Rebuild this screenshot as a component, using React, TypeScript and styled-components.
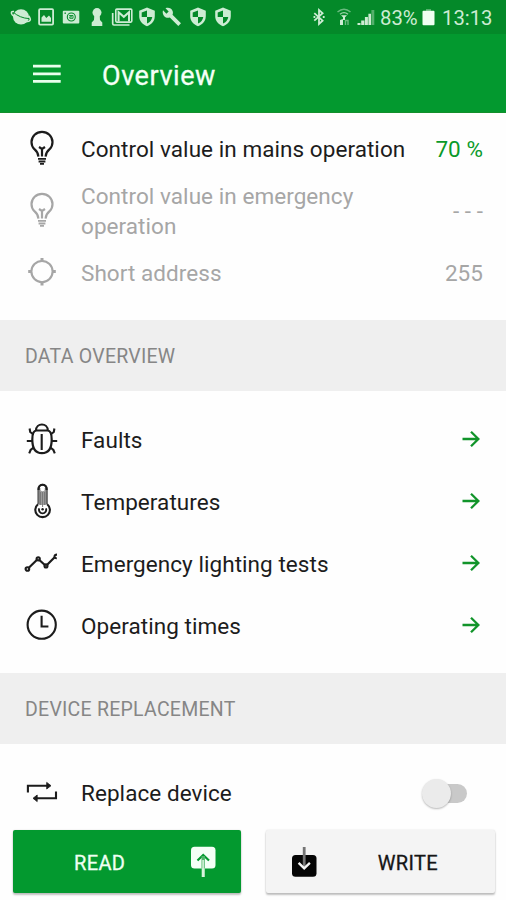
import React from "react";
import styled, { createGlobalStyle } from "styled-components";

const GREEN = "#03992f";

const GlobalStyle = createGlobalStyle`
  *, *::before, *::after { box-sizing: border-box; }
  body { margin: 0; background: #fefefe; font-family: Roboto, "Liberation Sans", sans-serif; }
`;

const Screen = styled.div`
  display: flex;
  flex-direction: column;
  width: 506px;
  height: 900px;
  overflow: hidden;
  background: #fefefe;
`;

const StatusBar = styled.div`
  display: flex;
  align-items: center;
  justify-content: space-between;
  flex: none;
  height: 34px;
  padding: 0 13px 0 8px;
  background: #048929;
  color: #cdecd3;
`;

const Notifications = styled.div`
  display: grid;
  grid-template-columns: repeat(9, 25.3px);
  justify-items: center;
`;

const SystemStatus = styled.div`
  display: flex;
  align-items: center;
`;

const StatusText = styled.span<{ $left: number; $width: number }>`
  width: ${(p) => p.$width}px;
  margin-left: ${(p) => p.$left}px;
  font-size: 20.3px;
  line-height: 34px;
  white-space: nowrap;
  padding-top: 1px;
`;

const Glyph = styled.svg<{ $left?: number }>`
  display: block;
  flex: none;
  margin-left: ${(p) => p.$left ?? 0}px;
  overflow: visible;
`;

const AppBar = styled.header`
  display: flex;
  align-items: center;
  flex: none;
  height: 79px;
  padding: 2px 0 0 32px;
  gap: 41px;
  background: ${GREEN};
  border-bottom: 1px solid #138f2c;
`;

const Title = styled.h1`
  margin: 0;
  color: #f4fff6;
  font-size: 27px;
  font-weight: 400;
  line-height: 34px;
  letter-spacing: 0.55px;
  padding-top: 3px;
  -webkit-text-stroke: 0.3px #f4fff6;
`;

const List = styled.section<{ $top: number; $bottom: number }>`
  flex: none;
  padding: ${(p) => p.$top}px 0 ${(p) => p.$bottom}px 21px;
`;

const Row = styled.div<{ $muted?: boolean }>`
  display: flex;
  align-items: center;
  height: 62px;
  padding-right: 23px;
  color: ${(p) => (p.$muted ? "#a6a6a6" : "#1c1c1c")};
`;

const RowIcon = styled.svg`
  display: block;
  flex: none;
  width: 40px;
  height: 40px;
  margin-right: 20px;
  fill: none;
  stroke: currentColor;
  stroke-width: 2.1;
`;

const Label = styled.span`
  width: 335px;
  font-size: 22.5px;
  line-height: 30px;
  letter-spacing: 0.06px;
`;

const Value = styled.span<{ $accent?: boolean }>`
  margin-left: auto;
  font-size: 22.5px;
  line-height: 30px;
  letter-spacing: 0.06px;
  white-space: nowrap;
  color: ${(p) => (p.$accent ? "#0a9a2a" : "inherit")};
`;

const Arrow = styled.svg`
  display: block;
  width: 18px;
  height: 18px;
  margin: 0 3px 2px auto;
  fill: none;
  stroke: #11942a;
  stroke-width: 2.3;
`;

const SectionHeader = styled.h2`
  display: flex;
  align-items: center;
  flex: none;
  height: 71px;
  margin: 0;
  padding: 2px 0 0 25px;
  background: #efefef;
  color: #868686;
  font-size: 19.5px;
  font-weight: 400;
  letter-spacing: 0.25px;
`;

const Track = styled.span`
  position: relative;
  width: 38px;
  height: 19px;
  margin: 0 16px 0 auto;
  border-radius: 10px;
  background: #c9c9c9;
`;

const Knob = styled.span`
  position: absolute;
  left: -7px;
  top: -5px;
  width: 29px;
  height: 29px;
  border-radius: 50%;
  background: #ebebeb;
  box-shadow: 0 1px 2px rgba(0, 0, 0, 0.28);
`;

const Actions = styled.footer`
  display: grid;
  grid-template-columns: 228px 229px;
  gap: 25px;
  padding-left: 13px;
  margin-top: 6px;
`;

const ActionButton = styled.button<{ $primary?: boolean }>`
  display: flex;
  align-items: center;
  justify-content: space-between;
  height: 63px;
  padding: ${(p) => (p.$primary ? "0 25px 0 61px" : "0 57px 0 25px")};
  border: 0;
  border-radius: 2px;
  background: ${(p) => (p.$primary ? GREEN : "#f4f4f4")};
  color: ${(p) => (p.$primary ? "#effff2" : "#161616")};
  font: 400 20px Roboto, "Liberation Sans", sans-serif;
  box-shadow: 0 2px 2px rgba(0, 0, 0, 0.24), 0 0 2px rgba(0, 0, 0, 0.12);
`;

const ActionText = styled.span`
  padding-top: 2px;
  letter-spacing: 0.35px;
  -webkit-text-stroke: 0.3px currentColor;
`;

const Bulb = () => (
  <RowIcon viewBox="0 0 40 40">
    <path d="M17.4 27.6C17.2 24.3 15.8 22.2 13.4 20.2A10.5 10.3 0 1 1 28.6 20.2C26.2 22.2 24.8 24.3 24.6 27.6" strokeWidth="2.2" />
    <path d="M18 18L21 20L24 18M21 19.5V27.5" strokeWidth="2.2" />
    <path d="M17 29.9H25M17.6 32.5H24.4M19 34.8H23" strokeWidth="1.8" />
  </RowIcon>
);

const Crosshair = () => (
  <RowIcon viewBox="0 0 40 40">
    <circle cx="21" cy="18.6" r="10.6" />
    <path d="M21 5V9M21 28.5V32.4M7.2 18.6H11M31 18.6H34.8" strokeWidth="3" />
  </RowIcon>
);

const Bug = () => (
  <RowIcon viewBox="0 0 40 40">
    <path d="M15 10.5C15 2.4 26.8 2.4 26.8 10.5" />
    <path d="M15.5 10.5H26.5C29.5 10.5 30.7 14 30.7 19.5C30.7 28.5 27 33.2 20.9 33.2S11.3 28.5 11.3 19.5C11.3 14 12.5 10.5 15.5 10.5Z" strokeWidth="2.2" />
    <path d="M20.7 14V30M5.8 21H11.3M30.7 21H36.2M8.6 8.5L9.2 12L12.5 14.5M33.4 8.5L32.8 12L29.5 14.5M8.2 33.4L9.6 30L12.6 27.5M33.8 33.4L32.4 30L29.4 27.5" />
  </RowIcon>
);

const Thermometer = () => (
  <RowIcon viewBox="0 0 40 40">
    <path d="M17.4 6H25.8V23H17.4Z" fill="#a0a0a0" stroke="none" />
    <path d="M17.4 22V7A4.2 4.2 0 0 1 25.8 7V22" stroke="#666" />
    <path d="M17.6 8V6.8A4 4 0 0 1 25.6 6.8V8" />
    <path d="M17 22.2A7.3 7.3 0 1 0 26.2 22.2" />
    <path d="M21.6 10V25M19.6 10V23M23.6 10V23" stroke="#777" strokeWidth="1" />
    <circle cx="21.6" cy="7" r="2.2" fill="#fff" stroke="none" />
    <path d="M18.3 26.3A3.6 3.6 0 1 0 24.9 26.3" strokeWidth="1.9" />
    <circle cx="21.6" cy="27.2" r="1.2" fill="currentColor" stroke="none" />
  </RowIcon>
);

const Trend = () => (
  <RowIcon viewBox="0 0 40 40">
    <path d="M7.8 23.8L15.8 16M18.6 16.2L23.6 20.8M26.4 20.6L33.4 13.5" strokeWidth="2.2" />
    <circle cx="6.4" cy="25" r="1.8" />
    <circle cx="17.2" cy="14.8" r="1.6" />
    <circle cx="25" cy="21.9" r="1.5" />
    <path d="M36 10.6C32.7 10.5 32.7 14.4 35.8 14.3" />
  </RowIcon>
);

const Clock = () => (
  <RowIcon viewBox="0 0 40 40">
    <circle cx="20.7" cy="18.7" r="14.1" />
    <path d="M20.6 9.8V20.5H27.4" />
  </RowIcon>
);

const Swap = () => (
  <RowIcon viewBox="0 0 40 40">
    <path d="M6.9 19.5V12.7H28M35 18.5V25.3H14" />
    <path d="M25.7 9.4L30 12.7L25.7 16ZM16.2 22L12 25.3L16.2 28.6Z" fill="currentColor" strokeWidth="0.8" />
  </RowIcon>
);

const GoArrow = () => (
  <Arrow viewBox="0 0 18 18">
    <path d="M0.5 9H16.5M9 1.7L16.4 9L9 16.3" />
  </Arrow>
);

const Shield = () => (
  <Glyph width="22" height="22" viewBox="0 0 22 22">
    <path d="M11 1.6L18.8 4.8V10C18.8 14.8 15.7 18.6 11 20.2C6.3 18.6 3.2 14.8 3.2 10V4.8Z" fill="currentColor" />
    <path d="M11 4.6V11H5.7V6.4ZM11 11H16.3C15.8 14 14 16.3 11 17.5Z" fill="#048929" />
  </Glyph>
);

const statusIcons = [
  <Glyph width="22" height="22" viewBox="0 0 22 22">
    <ellipse cx="11" cy="10.8" rx="8" ry="7.6" fill="currentColor" />
    <path d="M3.2 6.2C7.5 10 13 12.3 19 12.6" fill="none" stroke="#048929" strokeWidth="1" />
    <path d="M4 5.6C1.2 5.2 0.6 6.6 2.2 8.7C6 13.2 14 16.3 18.8 15.2C21 14.4 20.8 12.4 18.6 9.8" fill="none" stroke="currentColor" strokeWidth="1.5" />
  </Glyph>,
  <Glyph width="22" height="22" viewBox="0 0 22 22">
    <rect x="4.1" y="3.2" width="14" height="15.4" rx="1" fill="none" stroke="currentColor" strokeWidth="1.8" />
    <path d="M6.5 15.8V11.5L9 9L11.3 12L14 9.5L16 12V15.8Z" fill="currentColor" />
  </Glyph>,
  <Glyph width="22" height="22" viewBox="0 0 22 22">
    <rect x="2.8" y="4.8" width="16.5" height="12.6" rx="1" fill="currentColor" />
    <circle cx="11.3" cy="11" r="4" fill="none" stroke="#048929" strokeWidth="1.1" />
    <path d="M9.2 9.5H13V12.3H9.8V10.8H12" fill="none" stroke="#048929" strokeWidth="0.9" />
    <rect x="4.5" y="6.5" width="1.4" height="1.4" fill="#048929" />
  </Glyph>,
  <Glyph width="22" height="22" viewBox="0 0 22 22">
    <circle cx="11" cy="6.6" r="4.5" fill="currentColor" />
    <path d="M8.3 9H13.7L14 14L16.3 16.5V20H5.7V16.5L8 14Z" fill="currentColor" />
  </Glyph>,
  <Glyph width="22" height="22" viewBox="0 0 22 22">
    <path d="M1.7 7V17.8Q1.7 19 3 19H18.5" fill="none" stroke="currentColor" strokeWidth="1.7" />
    <rect x="4.8" y="3.1" width="16" height="13" rx="1" fill="none" stroke="currentColor" strokeWidth="1.6" />
    <path d="M7.6 15.6V6.2L12.8 10.8L18 6.2V15.6" fill="none" stroke="currentColor" strokeWidth="2" />
  </Glyph>,
  <Shield />,
  <Glyph width="22" height="22" viewBox="0 0 22 22">
    <path d="M2 4.3L5.4 7.7L7.7 5.4L4.5 2.2C7.4 1.3 10.5 2.1 11.6 5C12.1 6.4 12 7.7 11.5 8.8L20 17.2L17.3 20L8.8 11.5C4.5 13.2.6 8.8 2 4.3Z" fill="currentColor" />
  </Glyph>,
  <Shield />,
  <Shield />,
];

export default function App() {
  return (
    <Screen>
      <GlobalStyle />
      <StatusBar>
        <Notifications>
          {statusIcons.map((icon, i) => (
            <React.Fragment key={i}>{icon}</React.Fragment>
          ))}
        </Notifications>
        <SystemStatus>
          <Glyph width="12" height="18" viewBox="0 0 12 18">
            <path d="M1.3 5.2L9.6 12.7L6 16V2L9.6 5.2L1.3 12.7" fill="none" stroke="currentColor" strokeWidth="1.8" />
            <path d="M0.5 8H2.3V10H0.5ZM9.8 8H11.6V10H9.8Z" fill="currentColor" />
          </Glyph>
          <Glyph $left={12} width="14" height="18" viewBox="0 0 14 18">
            <g fill="none" stroke="currentColor">
              <path d="M0.5 4Q7 -1.5 13.5 4" strokeWidth="1.5" opacity="0.5" />
              <path d="M3 6.2Q7 3 11 6.2" strokeWidth="1.4" opacity="0.75" />
            </g>
            <path d="M4 7.3H10L7 10.3ZM6 9H8V12H6ZM3 12L6 11V17H3Z" fill="currentColor" />
            <path d="M8.5 17V12.5H11V17" fill="none" stroke="currentColor" strokeWidth="1.4" opacity="0.5" />
          </Glyph>
          <Glyph $left={6} width="18" height="18" viewBox="0 0 18 18">
            <path d="M0.5 15H3.5V17H0.5ZM4.2 12.5H7.4V17H4.2ZM7.9 9H10.9V17H7.9ZM11.4 5.8H14V17H11.4Z" fill="currentColor" />
            <path d="M14.4 2H17.3V17H14.4Z" fill="currentColor" opacity="0.4" />
          </Glyph>
          <StatusText $left={5} $width={39}>83%</StatusText>
          <Glyph $left={3} width="13" height="18" viewBox="0 0 13 18">
            <path d="M4 1H9V4H4Z" fill="currentColor" opacity="0.4" />
            <rect x="0.5" y="2.8" width="12" height="14.5" rx="1" fill="#effff2" />
          </Glyph>
          <StatusText $left={7} $width={51}>13:13</StatusText>
        </SystemStatus>
      </StatusBar>

      <AppBar>
        <Glyph width="29" height="20" viewBox="0 0 29 20">
          <path d="M1 2.2H28.7M1 9.8H28.7M1 17.4H28.7" stroke="#e9ffed" strokeWidth="2.7" />
        </Glyph>
        <Title>Overview</Title>
      </AppBar>

      <List $top={5} $bottom={16}>
        <Row>
          <Bulb />
          <Label>Control value in mains operation</Label>
          <Value $accent>70 %</Value>
        </Row>
        <Row $muted>
          <Bulb />
          <Label>Control value in emergency operation</Label>
          <Value>- - -</Value>
        </Row>
        <Row $muted>
          <Crosshair />
          <Label>Short address</Label>
          <Value>255</Value>
        </Row>
      </List>

      <SectionHeader>DATA OVERVIEW</SectionHeader>
      <List $top={18} $bottom={16}>
        <Row>
          <Bug />
          <Label>Faults</Label>
          <GoArrow />
        </Row>
        <Row>
          <Thermometer />
          <Label>Temperatures</Label>
          <GoArrow />
        </Row>
        <Row>
          <Trend />
          <Label>Emergency lighting tests</Label>
          <GoArrow />
        </Row>
        <Row>
          <Clock />
          <Label>Operating times</Label>
          <GoArrow />
        </Row>
      </List>

      <SectionHeader>DEVICE REPLACEMENT</SectionHeader>
      <List $top={18} $bottom={0}>
        <Row>
          <Swap />
          <Label>Replace device</Label>
          <Track role="switch" aria-checked="false">
            <Knob />
          </Track>
        </Row>
      </List>

      <Actions>
        <ActionButton $primary>
          <ActionText>READ</ActionText>
          <Glyph width="26" height="32" viewBox="0 0 26 32">
            <rect x="1" y="0.8" width="24.5" height="21.7" rx="3.5" fill="#f4fff6" />
            <path d="M7.5 14.5L13.2 9L19 14.5" fill="none" stroke={GREEN} strokeWidth="2.2" />
            <path d="M13.2 10V22.5" stroke="#4fb56b" strokeWidth="3.4" />
            <path d="M13.2 14V31" stroke="#c8edcf" strokeWidth="2" />
            <path d="M13.2 22.5V31" stroke="#d8f3dd" strokeWidth="3" />
          </Glyph>
        </ActionButton>
        <ActionButton>
          <Glyph width="26" height="32" viewBox="0 0 26 32">
            <rect x="1" y="9" width="24.5" height="21.8" rx="3.5" fill="#050505" />
            <path d="M13.2 1V22" stroke="#747474" strokeWidth="2.8" />
            <path d="M7.6 16.8L13.2 22.3L18.9 16.8" fill="none" stroke="#f4f4f4" strokeWidth="2.4" />
          </Glyph>
          <ActionText>WRITE</ActionText>
        </ActionButton>
      </Actions>
    </Screen>
  );
}
